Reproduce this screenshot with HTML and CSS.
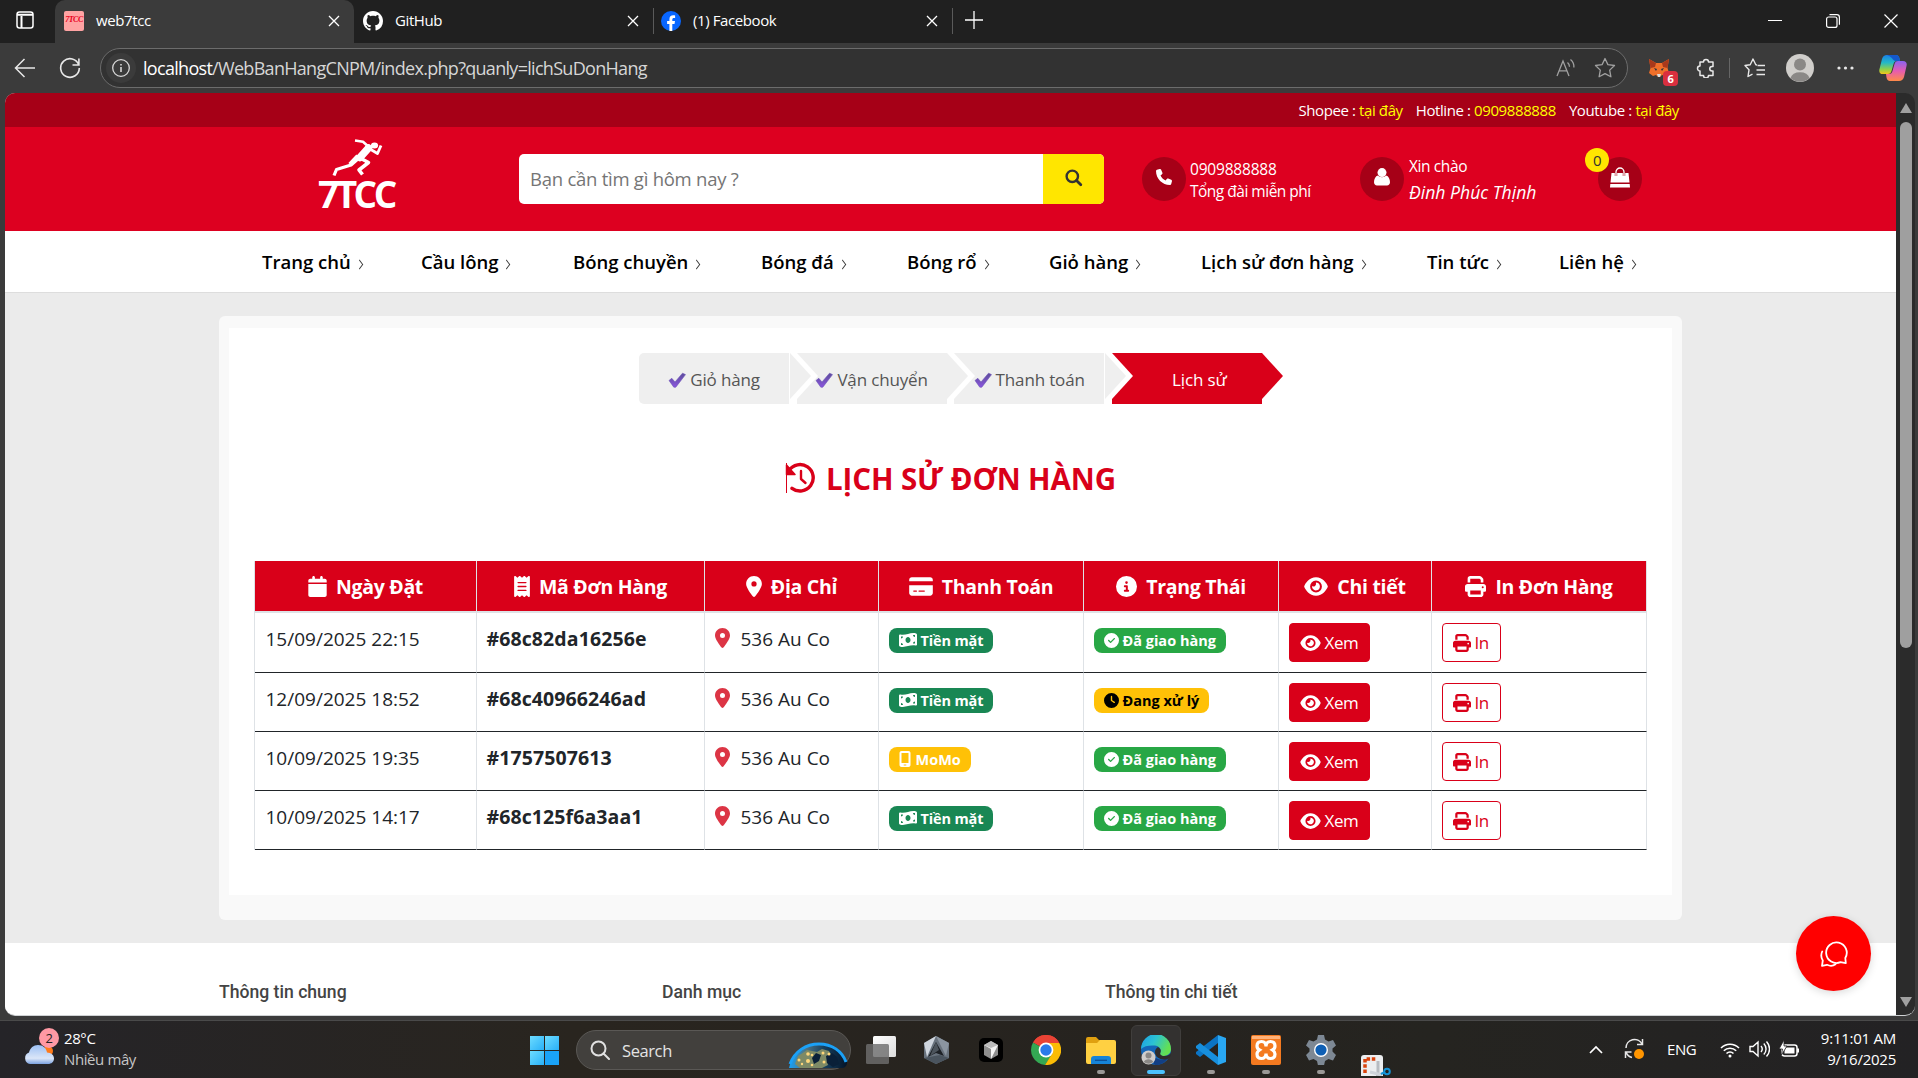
FILE: index.html
```html
<!DOCTYPE html>
<html lang="vi">
<head>
<meta charset="utf-8">
<title>web7tcc</title>
<link rel="stylesheet" href="styles.css">
</head>
<body>
<svg class="sprite" aria-hidden="true">
  <symbol id="i-calendar" viewBox="0 0 448 512"><path d="M96 32V64H48C21.500 64 0 85.500 0 112v48H448V112c0-26.500-21.500-48-48-48H352V32c0-17.700-14.300-32-32-32s-32 14.300-32 32V64H160V32c0-17.700-14.300-32-32-32S96 14.300 96 32zM448 192H0V464c0 26.500 21.500 48 48 48H400c26.500 0 48-21.500 48-48V192z"/></symbol>
  <symbol id="i-receipt" viewBox="0 0 384 512"><path d="M14 2.200C22.500-1.700 32.500-.3 39.600 5.800L80 40.400 120.400 5.800c9-7.700 22.300-7.700 31.200 0L192 40.400 232.400 5.800c9-7.700 22.300-7.700 31.200 0L304 40.400 344.400 5.800c7.100-6.100 17.100-7.500 25.600-3.600s14 12.400 14 21.800V488c0 9.400-5.500 17.900-14 21.800s-18.500 2.500-25.600-3.600L304 471.600l-40.400 34.600c-9 7.700-22.300 7.700-31.200 0L192 471.600l-40.400 34.600c-9 7.700-22.300 7.700-31.200 0L80 471.600 39.600 506.200c-7.100 6.100-17.100 7.500-25.600 3.600S0 497.400 0 488V24C0 14.600 5.500 6.100 14 2.200zM96 144c-8.800 0-16 7.200-16 16s7.200 16 16 16H288c8.800 0 16-7.200 16-16s-7.200-16-16-16H96zM80 352c0 8.800 7.200 16 16 16H288c8.800 0 16-7.200 16-16s-7.200-16-16-16H96c-8.800 0-16 7.200-16 16zM96 240c-8.800 0-16 7.200-16 16s7.200 16 16 16H288c8.800 0 16-7.200 16-16s-7.200-16-16-16H96z"/></symbol>
  <symbol id="i-pin" viewBox="0 0 384 512"><path d="M215.700 499.200C267 435 384 279.400 384 192C384 86 298 0 192 0S0 86 0 192c0 87.400 117 243 168.300 307.200c12.300 15.300 35.100 15.300 47.400 0zM192 128a64 64 0 1 1 0 128 64 64 0 1 1 0-128z"/></symbol>
  <symbol id="i-card" viewBox="0 0 576 512"><path d="M64 32C28.700 32 0 60.700 0 96v32H576V96c0-35.300-28.700-64-64-64H64zM576 224H0V416c0 35.300 28.700 64 64 64H512c35.300 0 64-28.700 64-64V224zM112 352h64c8.800 0 16 7.200 16 16s-7.200 16-16 16H112c-8.800 0-16-7.200-16-16s7.200-16 16-16zm112 16c0-8.800 7.200-16 16-16H368c8.800 0 16 7.200 16 16s-7.200 16-16 16H240c-8.800 0-16-7.200-16-16z"/></symbol>
  <symbol id="i-info" viewBox="0 0 512 512"><path d="M256 512A256 256 0 1 0 256 0a256 256 0 1 0 0 512zM216 336h24V272H216c-13.300 0-24-10.700-24-24s10.700-24 24-24h48c13.300 0 24 10.700 24 24v88h8c13.300 0 24 10.700 24 24s-10.700 24-24 24H216c-13.300 0-24-10.700-24-24s10.700-24 24-24zm40-208a32 32 0 1 1 0 64 32 32 0 1 1 0-64z"/></symbol>
  <symbol id="i-eye" viewBox="0 0 576 512"><path d="M288 32c-80.800 0-145.500 36.800-192.600 80.600C48.600 156 17.300 208 2.500 243.700c-3.300 7.900-3.300 16.700 0 24.600C17.300 304 48.600 356 95.400 399.400C142.500 443.200 207.200 480 288 480s145.500-36.800 192.600-80.600c46.800-43.500 78.100-95.400 93-131.100c3.300-7.900 3.300-16.700 0-24.600c-14.900-35.700-46.200-87.700-93-131.100C433.500 68.800 368.800 32 288 32zM144 256a144 144 0 1 1 288 0 144 144 0 1 1 -288 0zm144-64c0 35.300-28.700 64-64 64c-7.100 0-13.900-1.200-20.300-3.300c-5.500-1.800-11.900 1.600-11.700 7.400c.3 6.900 1.300 13.800 3.200 20.700c13.700 51.200 66.400 81.600 117.600 67.900s81.600-66.400 67.900-117.600c-11.100-41.500-47.800-69.400-88.600-71.100c-5.800-.2-9.200 6.100-7.400 11.700c2.100 6.400 3.300 13.200 3.300 20.300z"/></symbol>
  <symbol id="i-print" viewBox="0 0 512 512"><path d="M128 0C92.700 0 64 28.700 64 64v96h64V64H354.700L384 93.300V160h64V93.300c0-17-6.700-33.300-18.700-45.300L400 18.700C388 6.700 371.700 0 354.700 0H128zM384 352v32 64H128V384 368 352H384zm64 32h32c17.700 0 32-14.300 32-32V256c0-35.300-28.700-64-64-64H64c-35.300 0-64 28.700-64 64v96c0 17.700 14.300 32 32 32H64v64c0 35.300 28.700 64 64 64H384c35.300 0 64-28.700 64-64V384zM432 248a24 24 0 1 1 0 48 24 24 0 1 1 0-48z"/></symbol>
  <symbol id="i-check" viewBox="0 0 512 512"><path d="M256 512A256 256 0 1 0 256 0a256 256 0 1 0 0 512zM369 209L241 337c-9.400 9.400-24.600 9.400-33.900 0l-64-64c-9.400-9.400-9.400-24.600 0-33.900s24.600-9.400 33.900 0l47 47L335 175c9.400-9.400 24.600-9.400 33.900 0s9.400 24.600 0 33.900z"/></symbol>
  <symbol id="i-clock" viewBox="0 0 512 512"><path d="M256 0a256 256 0 1 1 0 512A256 256 0 1 1 256 0zM232 120V256c0 8 4 15.500 10.700 20l96 64c11 7.400 25.900 4.400 33.300-6.700s4.400-25.900-6.700-33.300L280 243.200V120c0-13.300-10.700-24-24-24s-24 10.700-24 24z"/></symbol>
  <symbol id="i-mobile" viewBox="0 0 384 512"><path d="M16 64C16 28.700 44.700 0 80 0H304c35.300 0 64 28.700 64 64V448c0 35.300-28.700 64-64 64H80c-35.300 0-64-28.700-64-64V64zM144 448c0 8.800 7.200 16 16 16h64c8.800 0 16-7.200 16-16s-7.200-16-16-16H160c-8.800 0-16 7.200-16 16zM304 64H80V384H304V64z"/></symbol>
  <symbol id="i-cash" viewBox="0 0 576 512"><path d="M0 112.500V422.300c0 18 10.100 35 27 41.300c87 32.500 174 10.300 261-11.900c79.800-20.300 159.600-40.700 239.300-18.900c23 6.300 48.700-9.500 48.700-33.400V89.700c0-18-10.100-35-27-41.300C462 15.900 375 38.100 288 60.300C208.200 80.600 128.400 100.900 48.700 79.100C25.600 72.800 0 88.600 0 112.500zM288 352c-44.200 0-80-43-80-96s35.800-96 80-96s80 43 80 96s-35.800 96-80 96zM64 352c35.300 0 64 28.700 64 64H64V352zm64-208c0 35.300-28.700 64-64 64V144h64zM512 304v64H448c0-35.300 28.700-64 64-64zM448 96h64v64c-35.300 0-64-28.700-64-64z"/></symbol>
  <symbol id="i-phone" viewBox="0 0 512 512"><path d="M164.900 24.600c-7.700-18.600-28-28.500-47.400-23.200l-88 24C12.100 30.200 0 46 0 64C0 311.400 200.600 512 448 512c18 0 33.800-12.100 38.600-29.500l24-88c5.300-19.400-4.600-39.700-23.200-47.400l-96-40c-16.300-6.800-35.200-2.100-46.300 11.600L304.700 368C234.300 334.700 177.300 277.700 144 207.300L193.300 167c13.700-11.200 18.400-30 11.600-46.300l-40-96z"/></symbol>
  <symbol id="i-x" viewBox="0 0 12 12"><path d="M1 1l10 10M11 1L1 11" fill="none" stroke="currentColor" stroke-width="1.300"/></symbol>
  <symbol id="i-tick" viewBox="0 0 18 16"><path d="M1 8.500L3.800 6.300 7 10 14.500 1.200 17.500 2.600 7.800 15.200 5.800 15.200Z" fill="url(#tickg)" stroke="#6b52b8" stroke-width=".6" stroke-linejoin="round"/></symbol>
  <linearGradient id="tickg" x1="0" y1="0" x2="0" y2="1"><stop offset="0" stop-color="#5d4e9a"/><stop offset="1" stop-color="#8a55dd"/></linearGradient>
</svg>

<div class="tabstrip">
  <div class="tab-actions"><svg width="20" height="20" viewBox="0 0 20 20" fill="none" stroke="#fff" stroke-width="1.500"><rect x="2" y="2" width="16" height="16" rx="2.500"/><path d="M2 4.800h16M6.500 6v12" stroke-width="2"/></svg></div>
  <div class="tab active"><span class="fav7">7TCC</span><span class="tab-title">web7tcc</span><svg class="x"><use href="#i-x"/></svg></div>
  <div class="tab"><svg class="fav" viewBox="0 0 16 16" fill="#fff"><path d="M8 0C3.580 0 0 3.580 0 8c0 3.540 2.290 6.530 5.470 7.590.4.070.55-.17.55-.38 0-.19-.01-.82-.01-1.490-2.010.37-2.530-.49-2.690-.94-.09-.23-.48-.94-.82-1.130-.28-.15-.68-.52-.01-.53.63-.01 1.080.58 1.230.82.72 1.210 1.870.87 2.330.66.07-.52.28-.87.51-1.070-1.780-.2-3.640-.89-3.640-3.950 0-.87.31-1.590.82-2.150-.08-.2-.36-1.020.08-2.120 0 0 .67-.21 2.200.82.64-.18 1.320-.27 2-.27.68 0 1.360.09 2 .27 1.530-1.040 2.200-.82 2.200-.82.44 1.100.16 1.920.08 2.120.51.56.82 1.270.82 2.150 0 3.070-1.870 3.750-3.650 3.950.29.25.54.73.54 1.480 0 1.070-.01 1.930-.01 2.200 0 .21.15.46.55.38A8.010 8.010 0 0 0 16 8c0-4.420-3.580-8-8-8z"/></svg><span class="tab-title">GitHub</span><svg class="x"><use href="#i-x"/></svg></div>
  <div class="tab split"><svg class="fav" viewBox="0 0 20 20"><circle cx="10" cy="10" r="10" fill="#0866ff"/><path d="M8.400 19.900V13H6.100v-2.900h2.300V8.400c0-2.800 1.300-4.200 4-4.200.5 0 1.400.1 1.700.2v2.600h-1.100c-1.300 0-1.700.5-1.700 1.700v1.400h2.700L13.500 13h-2.200v6.900z" fill="#fff"/></svg><span class="tab-title">(1) Facebook</span><svg class="x"><use href="#i-x"/></svg></div>
  <div class="newtab"><svg width="18" height="18" viewBox="0 0 18 18" stroke="#fff" stroke-width="1.300"><path d="M9 0v18M0 9h18"/></svg></div>
  <div class="winctl">
    <svg viewBox="0 0 14 14" stroke="#fff"><path d="M0 6.500h14"/></svg>
    <svg viewBox="0 0 14 14" stroke="#fff" fill="none" stroke-width="1.200"><rect x=".6" y="3" width="10.400" height="10.400" rx="2"/><path d="M3.500 .7h7.300a2.600 2.600 0 0 1 2.600 2.600v7.500"/></svg>
    <svg viewBox="0 0 14 14" stroke="#fff" stroke-width="1.200"><path d="M.5 .5l13 13M13.500 .5l-13 13"/></svg>
  </div>
</div>

<div class="toolbar">
  <div class="tb back"><svg width="22" height="20" viewBox="0 0 22 20" fill="none" stroke="#e8e8e8" stroke-width="1.500"><path d="M21 10H2M10.500 1L1.500 10l9 9"/></svg></div>
  <div class="tb reload"><svg width="22" height="22" viewBox="0 0 22 22" fill="none" stroke="#e8e8e8" stroke-width="1.600"><path d="M19.800 8A9.300 9.300 0 1 0 20.300 11M19.900 1.500V8H13.500"/></svg></div>
  <div class="address">
    <span class="site"><svg width="18" height="18" viewBox="0 0 18 18" fill="none" stroke="#d8d8d8" stroke-width="1.300"><circle cx="9" cy="9" r="8.300"/><path d="M9 8v5M9 5v1.500" stroke-width="1.600"/></svg></span>
    <span class="url"><b>localhost</b>/WebBanHangCNPM/index.php?quanly=lichSuDonHang</span>
    <svg class="read" width="20" height="20" viewBox="0 0 20 20" fill="none" stroke="#a0a0a0" stroke-width="1.300"><path d="M1 18L7 3l6 15M3.200 12.800h7.600M11.500 4.500c1.500 1.200 2 2.700 2 4.200M14.500 1.500c2.600 2 3.600 4.700 3.400 8"/></svg>
    <svg class="star" width="22" height="22" viewBox="0 0 22 22" fill="none" stroke="#a0a0a0" stroke-width="1.300" stroke-linejoin="round"><path d="M11 1.500l2.900 6.100 6.600.9-4.800 4.600 1.200 6.700L11 16.600l-5.900 3.200 1.200-6.700L1.500 8.500l6.600-.9z"/></svg>
  </div>
  <div class="ext fox"><svg width="20" height="20" viewBox="0 0 20 20"><path d="M0 1l7 4h6l7-4-1.500 9L20 15l-4 3-3-1-2 2H9l-2-2-3 1-4-3 1.500-5z" fill="#f0702a"/><path d="M0 1l7 4-1 4-4.500 1zM20 1l-7 4 1 4 4.500 1z" fill="#a8391c"/><path d="M5 10l3 1-1 2zM15 10l-3 1 1 2z" fill="#24313f"/><path d="M8 16h4l-1 3H9z" fill="#ddd"/></svg><span class="count">6</span></div>
  <div class="ext puz"><svg width="20" height="20" viewBox="0 0 20 20" fill="none" stroke="#e8e8e8" stroke-width="1.500" stroke-linejoin="round"><path d="M4 4h3.500a2.500 2.500 0 0 1 5 0H17v4.500h-1a2 2 0 0 0 0 4.500h1v4.500h-4.500a2.500 2.500 0 0 1-5 0H4V13a2.500 2.500 0 0 1 0-5z"/></svg></div>
  <div class="ext fav-list"><svg width="22" height="20" viewBox="0 0 22 20" fill="none" stroke="#e8e8e8" stroke-width="1.400" stroke-linejoin="round"><path d="M13 7l-1.200-.2L9 1 6.200 6.800 1 7.500l4 4.300L4 18.500l4.500-2.300M13.500 7.500H21M12.500 12H21M12.500 16.500H21"/></svg></div>
  <div class="ext ava"><svg width="28" height="28" viewBox="0 0 28 28"><circle cx="14" cy="14" r="14" fill="#d0cecb"/><circle cx="14" cy="10.500" r="6" fill="#8a8886"/><path d="M4.500 24a9.800 7.500 0 0 1 19 0 14 14 0 0 1-19 0z" fill="#8a8886"/></svg></div>
  <div class="ext dots"><svg width="17" height="4" fill="#e8e8e8"><circle cx="2" cy="2" r="1.600"/><circle cx="8.500" cy="2" r="1.600"/><circle cx="15" cy="2" r="1.600"/></svg></div>
  <div class="ext cop"><svg width="28" height="26" viewBox="0 0 28 26"><defs><linearGradient id="c1" x1="0" y1="0" x2="0" y2="1"><stop offset="0" stop-color="#1a7fe6"/><stop offset=".4" stop-color="#23b8c8"/><stop offset=".75" stop-color="#8fd14a"/><stop offset="1" stop-color="#f5c518"/></linearGradient><linearGradient id="c2" x1="0" y1="0" x2="0" y2="1"><stop offset="0" stop-color="#8a63f0"/><stop offset=".5" stop-color="#e65cb0"/><stop offset="1" stop-color="#ff8a48"/></linearGradient></defs><path d="M8 0h9c2 0 3 1.500 3.500 3.500L21 6h-3c-2 0-3 1-3.500 3l-2 7c-.6 2-1.500 3-3.500 3H4C1 19-.3 17 .5 14L3 4C3.800 1.500 5.500 0 8 0z" fill="url(#c1)"/><path d="M8 0h9c2 0 3 1.500 3.500 3.500L21 6h-3c-2 0-3 0-4-1.500S11 1 8 0z" fill="#1458cc"/><path d="M20 26h-9c-2 0-3-1.500-3.500-3.500L7 19h3c2 0 3-1 3.500-3l2-7c.6-2 1.500-3 3.500-3h5c3 0 4.300 2 3.500 5L25 22c-.8 2.500-2.500 4-5 4z" fill="url(#c2)"/></svg></div>
</div>

<div class="window">
  <div class="page">
    <div class="topbar">
      <span>Shopee : <a>tại đây</a></span><span>Hotline : <a>0909888888</a></span><span>Youtube : <a>tại đây</a></span>
    </div>
    <div class="header">
      <div class="logo">
        <svg width="52" height="38" viewBox="0 0 52 38" fill="none" stroke="#fff" stroke-linejoin="round"><path d="M24 1.500l8 1.200 5 4.500" stroke-width="2.600"/><path d="M37.500 9L29 18.500" stroke-width="7.500" stroke-linecap="round"/><path d="M39 10l7.500 4.500L50 6.500" stroke-width="2.800"/><path d="M29 19l8.500 4.500L28 31l3.500 4.500" stroke-width="3.600"/><path d="M28.500 18.500L20 26 5.500 30.500 3 36.500" stroke-width="3.200"/><path d="M27 17l-8 8.500" stroke-width="4.500"/><ellipse cx="43.500" cy="6.500" rx="3.600" ry="3" fill="#fff" stroke="none"/></svg>
        <div class="logo-word">7TCC</div>
      </div>
      <div class="search"><span class="ph">Bạn cần tìm gì hôm nay ?</span><span class="go"><svg width="18" height="18" viewBox="0 0 18 18" fill="none" stroke="#333"><circle cx="7.300" cy="7.300" r="5.700" stroke-width="2.400"/><path d="M11.500 11.500l4.300 4.300" stroke-width="2.800" stroke-linecap="round"/></svg></span></div>
      <div class="contact phone"><span class="disc"><svg width="16" height="16" fill="#fff"><use href="#i-phone"/></svg></span><div class="lines"><span class="num">0909888888</span><span class="free">Tổng đài miễn phí</span></div></div>
      <div class="contact user"><span class="disc"><svg width="16" height="18" viewBox="0 0 16 18" fill="#fff"><circle cx="8" cy="4.600" r="4.500"/><path d="M4 7.500c2 2.200 6 2.200 8 0 2.600.6 4 3.500 4 6.800 0 2-1.300 3.200-3 3.200H3c-1.700 0-3-1.200-3-3.200 0-3.300 1.400-6.200 4-6.800z"/></svg></span><div class="lines"><span>Xin chào</span><em>Đinh Phúc Thịnh</em></div></div>
      <div class="contact cart"><span class="disc"><svg width="20" height="21" viewBox="0 0 20 21" fill="#fff"><path d="M1.500 6h17l1 9.500H.5zM.3 17h19.400l.3 3.500H0z"/><path d="M6 9V5a4 4 0 0 1 8 0v4" fill="none" stroke="#a60017" stroke-width="2.400"/><path d="M6 9V5a4 4 0 0 1 8 0v4" fill="none" stroke="#fff" stroke-width="1.300"/></svg></span><span class="badge0">0</span></div>
    </div>
    <nav class="nav">
      <a>Trang chủ</a><a>Cầu lông</a><a>Bóng chuyền</a><a>Bóng đá</a><a>Bóng rổ</a><a>Giỏ hàng</a><a>Lịch sử đơn hàng</a><a>Tin tức</a><a>Liên hệ</a>
    </nav>
    <div class="main">
      <div class="shell"><div class="panel">
        <div class="steps">
          <div class="step first"><svg class="tick"><use href="#i-tick"/></svg>Giỏ hàng</div>
          <div class="step"><svg class="tick"><use href="#i-tick"/></svg>Vận chuyển</div>
          <div class="step"><svg class="tick"><use href="#i-tick"/></svg>Thanh toán</div>
          <div class="step current">Lịch sử</div>
        </div>
        <h1><svg width="31" height="32" viewBox="0 0 31 32" fill="none" stroke="#d90019"><path d="M1.500 1v30" stroke-width="1"/><path d="M4 8.500A13.200 13.200 0 1 1 7 26.300" stroke-width="3.400" stroke-linecap="round"/><path d="M1.500 3v9.500H10z" fill="#d90019" stroke-width="1.500" stroke-linejoin="round"/><path d="M16 9v8l4.500 4" stroke-width="2.400" stroke-linecap="round" stroke-linejoin="round"/></svg>LỊCH SỬ ĐƠN HÀNG</h1>
        <table>
          <colgroup><col class="c1"><col class="c2"><col class="c3"><col class="c4"><col class="c5"><col class="c6"><col class="c7"></colgroup>
          <thead><tr>
            <th><svg class="w18"><use href="#i-calendar"/></svg>Ngày Đặt</th>
            <th><svg class="w16"><use href="#i-receipt"/></svg>Mã Đơn Hàng</th>
            <th><svg class="w16"><use href="#i-pin"/></svg>Địa Chỉ</th>
            <th><svg class="w24"><use href="#i-card"/></svg>Thanh Toán</th>
            <th><svg class="w21"><use href="#i-info"/></svg>Trạng Thái</th>
            <th><svg class="w24"><use href="#i-eye"/></svg>Chi tiết</th>
            <th><svg class="w21"><use href="#i-print"/></svg>In Đơn Hàng</th>
          </tr></thead>
          <tbody>
            <tr><td class="date">15/09/2025 22:15</td><td class="id">#68c82da16256e</td><td><svg class="pin"><use href="#i-pin"/></svg>536 Au Co</td>
              <td><span class="pill cash"><svg><use href="#i-cash"/></svg>Tiền mặt</span></td>
              <td><span class="pill done"><svg><use href="#i-check"/></svg>Đã giao hàng</span></td>
              <td><span class="btn view"><svg><use href="#i-eye"/></svg>Xem</span></td><td><span class="btn print"><svg><use href="#i-print"/></svg>In</span></td></tr>
            <tr><td class="date">12/09/2025 18:52</td><td class="id">#68c40966246ad</td><td><svg class="pin"><use href="#i-pin"/></svg>536 Au Co</td>
              <td><span class="pill cash"><svg><use href="#i-cash"/></svg>Tiền mặt</span></td>
              <td><span class="pill wait"><svg><use href="#i-clock"/></svg>Đang xử lý</span></td>
              <td><span class="btn view"><svg><use href="#i-eye"/></svg>Xem</span></td><td><span class="btn print"><svg><use href="#i-print"/></svg>In</span></td></tr>
            <tr><td class="date">10/09/2025 19:35</td><td class="id">#1757507613</td><td><svg class="pin"><use href="#i-pin"/></svg>536 Au Co</td>
              <td><span class="pill momo"><svg><use href="#i-mobile"/></svg>MoMo</span></td>
              <td><span class="pill done"><svg><use href="#i-check"/></svg>Đã giao hàng</span></td>
              <td><span class="btn view"><svg><use href="#i-eye"/></svg>Xem</span></td><td><span class="btn print"><svg><use href="#i-print"/></svg>In</span></td></tr>
            <tr><td class="date">10/09/2025 14:17</td><td class="id">#68c125f6a3aa1</td><td><svg class="pin"><use href="#i-pin"/></svg>536 Au Co</td>
              <td><span class="pill cash"><svg><use href="#i-cash"/></svg>Tiền mặt</span></td>
              <td><span class="pill done"><svg><use href="#i-check"/></svg>Đã giao hàng</span></td>
              <td><span class="btn view"><svg><use href="#i-eye"/></svg>Xem</span></td><td><span class="btn print"><svg><use href="#i-print"/></svg>In</span></td></tr>
          </tbody>
        </table>
      </div></div>
    </div>
    <footer class="footer"><h4>Thông tin chung</h4><h4>Danh mục</h4><h4>Thông tin chi tiết</h4></footer>
    <div class="chat"><svg width="28" height="26" viewBox="0 0 28 26" fill="none" stroke="#fff" stroke-width="1.800" stroke-linejoin="round" stroke-linecap="round"><path d="M25.800 22.200l-5.300-1A10.300 10.300 0 1 1 25.300 17z"/><path d="M2.200 10.500A9.500 9.500 0 0 0 2.800 19.500L2 24.800l5-1c2.800 1.400 6 1.300 8.500-.5"/></svg></div>
  </div>
  <div class="scroll"><i class="up"></i><i class="thumb"></i><i class="down"></i></div>
</div>

<div class="taskbar">
  <div class="weather">
    <svg width="34" height="38" viewBox="0 0 34 38"><defs><linearGradient id="cl" x1="0" y1="0" x2="0" y2="1"><stop offset="0" stop-color="#9cc0f4"/><stop offset=".7" stop-color="#dbe6f8"/><stop offset="1" stop-color="#7ba2e0"/></linearGradient></defs><circle cx="24" cy="23" r="5" fill="#ff7a1a"/><path d="M6 36a6 6 0 0 1-1-11.500C6 20 9.500 17 14 17c5 0 8.500 3.500 9 7.500 4 .2 7 2.500 7 6 0 3.300-2.500 5.500-6 5.500z" fill="url(#cl)"/></svg>
    <span class="wbadge">2</span>
    <div class="wtext"><span>28°C</span><span>Nhiều mây</span></div>
  </div>
  <div class="start"><i></i><i></i><i></i><i></i></div>
  <div class="tsearch"><svg width="20" height="20" viewBox="0 0 20 20" fill="none" stroke="#e0e0e0" stroke-width="2"><circle cx="8.500" cy="8.500" r="7"/><path d="M13.500 13.500l5.500 5.500" stroke-linecap="round"/></svg><span>Search</span>
    <svg class="globe" width="60" height="27" viewBox="0 0 60 27"><defs><linearGradient id="gl" x1="0" y1="0" x2="1" y2="0"><stop offset="0" stop-color="#18a0f5"/><stop offset=".3" stop-color="#4f7484"/><stop offset=".6" stop-color="#17405f"/><stop offset="1" stop-color="#041428"/></linearGradient></defs><path d="M1 26C5 10 17 1 31 1s24 8 28 19c0 4-2 6-6 6z" fill="url(#gl)"/><path d="M2 22C7 9 18 2 31 2s23 7 27 18" fill="none" stroke="#1ba1f7" stroke-width="3"/><path d="M10 14l9-6 10 2 5-3 7 2 3 6-5 3 1 5-6 3H12l-5-4z" fill="#7d8a66"/><path d="M28 11l5 2-2 6-5 3-2-6zM38 14l6-3 5 4 2 7-6 3-6-4z" fill="#0a2038"/><g fill="#ffd77a"><circle cx="20" cy="12" r="1.800"/><circle cx="24" cy="13" r="1.300"/><circle cx="35" cy="11" r="1.500"/><circle cx="11" cy="18" r="1.500"/><circle cx="36" cy="20" r="1.500"/><circle cx="20" cy="19" r="2"/><circle cx="24" cy="23" r="1.300"/><circle cx="41" cy="12" r="1.500"/><circle cx="14" cy="22" r="1.200"/></g></svg>
  </div>
  <div class="apps">
    <div class="app"><svg viewBox="0 0 30 30"><defs><linearGradient id="tv" x1="0" y1="0" x2="1" y2="1"><stop offset="0" stop-color="#fff"/><stop offset="1" stop-color="#dcdcdc"/></linearGradient></defs><rect x="7" y="1" width="23" height="21" rx="1.500" fill="url(#tv)"/><rect x="0" y="9" width="23" height="20" rx="1.500" fill="#6e6e6e" opacity=".82"/></svg></div>
    <div class="app"><svg viewBox="0 0 30 30"><path d="M15 1l13 7v15l-13 6-12-6V8z" fill="#68727d"/><path d="M15 1L3 8l3 14z" fill="#cfd6de"/><path d="M15 1l13 7-3 13z" fill="#8b95a0"/><path d="M3 23l12 6 13-6-9-3z" fill="#4a545e"/><path d="M15 7l8 14-8-3-8 4z" fill="#1d2126"/><path d="M15 7l3 8-9 6z" fill="#4c545c"/></svg></div>
    <div class="app"><svg viewBox="0 0 30 30"><rect x="3" y="3" width="24" height="24" rx="5" fill="#000"/><path d="M15 6l7 4v10l-7 4-7-4V10z" fill="#8d8d8d"/><path d="M8 10h14l-7 14v-10z" fill="#f3f3f3"/><path d="M15 6l7 4-7 3-7-3z" fill="#bbb"/></svg></div>
    <div class="app"><svg viewBox="0 0 30 30"><path d="M15 15L2 7.500A15 15 0 0 1 28 7.500z" fill="#ea4335"/><path d="M15 15L2 7.500a15 15 0 0 0 12 22.400L21.500 19z" fill="#34a853"/><path d="M15 8h13.300A15 15 0 0 1 14 30l7.500-12z" fill="#fbbc05"/><path d="M2 7.500A15 15 0 0 1 28.300 8H15z" fill="#ea4335"/><circle cx="15" cy="15" r="7.400" fill="#fff"/><circle cx="15" cy="15" r="5.700" fill="#2b7bea"/></svg></div>
    <div class="app run"><svg viewBox="0 0 30 30"><path d="M0 4a2 2 0 0 1 2-2h8l3 3h2v10H0z" fill="#e0a010"/><path d="M0 8h11l3-3h14a2 2 0 0 1 2 2v20a2 2 0 0 1-2 2H2a2 2 0 0 1-2-2z" fill="#ffd042"/><path d="M5 29v-5a3 3 0 0 1 3-3h14a3 3 0 0 1 3 3v5z" fill="#1684d8"/><path d="M9 25.300h12" stroke="#0c4f96" stroke-width="1.300"/></svg></div>
    <div class="app run live"><svg viewBox="0 0 30 30"><defs><linearGradient id="e1" x1="0" y1="0" x2="1" y2=".4"><stop offset="0" stop-color="#1b9de8"/><stop offset=".5" stop-color="#2cc3d2"/><stop offset="1" stop-color="#63e052"/></linearGradient></defs><circle cx="15" cy="15" r="15" fill="#1467b8"/><path d="M0 14A15 15 0 0 1 30 14c0 4-3 7-7.500 7-3 0-4.500-1.500-3.500-3 2-4-1-7-5-7.500C8 10 3 11 0 14z" fill="url(#e1)"/><path d="M12 17c0 6 6 9 12 7l3-1c-3 5-8 7.500-13 7-4-3-5-9-2-13z" fill="#123f84"/><path d="M14 17c0-2 1-4 3-5 2 1 3.500 3 2.500 5.500-.9 1.700.5 3.500 4 3.500 2.500 0 5-1 6.500-3l-.2 3-2 2.500c-6 2.500-13.800 0-13.800-6.500z" fill="#2f2d2c"/><circle cx="7.500" cy="22.500" r="7" fill="#cfcdcb"/><circle cx="7.500" cy="20.500" r="3" fill="#8a8886"/><path d="M2.800 27a5 4 0 0 1 9.400 0 7 7 0 0 1-9.400 0z" fill="#8a8886"/></svg></div>
    <div class="app run"><svg viewBox="0 0 30 30"><path d="M22 0l8 3v24l-8 3z" fill="#29a7f2"/><path d="M22 0v8L4 22l-4-3v-2z" fill="#0b74c4"/><path d="M22 30v-8L4 8l-4 3v2z" fill="#178fdd"/></svg></div>
    <div class="app run"><svg viewBox="0 0 30 30"><rect width="30" height="30" rx="2" fill="#f47a20"/><path d="M1 1h28v3H1z" fill="#ffb27a"/><path d="M15 11.500c0-3-1.500-5-4.500-5S6 8.500 6 11c0 2.200 1 3.200 2.500 4C7 16 6 17 6 19c0 3 1.800 4.500 4.500 4.500s4.500-2 4.500-5c0 3 1.500 5 4.500 5S24 22 24 19c0-2-1-3-2.500-4 1.500-.8 2.500-1.800 2.500-4 0-2.500-1.500-4.500-4.500-4.500s-4.500 2-4.500 5z" fill="none" stroke="#fff" stroke-width="3.200"/></svg></div>
    <div class="app run"><svg viewBox="0 0 30 30"><path d="M12 0h6l1 4.500 3.500 2L27 5l3 5.500-3.500 3v3L30 20l-3 5.500-4.500-1.500-3.500 2-1 4.500h-6L11 26l-3.500-2L3 25.500 0 20l3.500-3.500v-3L0 10.500 3 5l4.500 1.500 3.500-2z" fill="#7d8894"/><circle cx="15" cy="15" r="7" fill="#fff"/><circle cx="15" cy="15" r="5.600" fill="#0e5fb4"/></svg></div>
    <div class="app snip"><svg viewBox="0 0 30 30"><rect x="0" y="6" width="22" height="24" rx="3" fill="#eceef0"/><path d="M4 24V10h12" fill="none" stroke="#d9420b" stroke-width="3.500" stroke-dasharray="3.500 1.700"/><path d="M17 12v12l-1 6" stroke="#b7bcc2" stroke-width="3" fill="none"/><path d="M9 23l12 3" stroke="#cfd4da" stroke-width="3"/><path d="M20 25l4-2" stroke="#1593d6" stroke-width="2.500"/><circle cx="26" cy="22.500" r="2.800" fill="none" stroke="#1593d6" stroke-width="2"/></svg></div>
  </div>
  <div class="tray">
    <svg class="t-up" width="14" height="9" viewBox="0 0 14 9" fill="none" stroke="#fff" stroke-width="1.700"><path d="M1 8l6-6 6 6"/></svg>
    <svg class="t-sync" width="24" height="22" viewBox="0 0 24 22" fill="none" stroke="#e8e8e8" stroke-width="1.500"><path d="M3 10A8.500 8.500 0 0 1 19 6M19.500 1v5.500H14M9 19.500A8.500 8.500 0 0 1 3 14M2.500 20v-6H8.500"/><circle cx="16" cy="16" r="5" fill="#ff9500" stroke="none"/></svg>
    <span class="lang">ENG</span>
    <svg class="t-wifi" width="20" height="17" viewBox="0 0 20 17" fill="none" stroke="#fff" stroke-width="1.600"><path d="M1 7a12.700 12.700 0 0 1 18 0M3.800 9.800a8.800 8.800 0 0 1 12.400 0M6.500 12.500a5 5 0 0 1 7 0"/><circle cx="10" cy="15" r="1.500" fill="#fff" stroke="none"/></svg>
    <svg class="t-vol" width="21" height="18" viewBox="0 0 21 18" fill="none" stroke="#fff" stroke-width="1.400"><path d="M1 6.500h3L9 2v14l-5-4.500H1zM12 6c1.500 1.800 1.500 4.200 0 6M14.800 3.500c3 3.200 3 7.800 0 11M17.500 1.500c4 4.500 4 10.500 0 15"/></svg>
    <svg class="t-bat" width="21" height="18" viewBox="0 0 21 18"><rect x="3" y="5" width="15" height="11" rx="2.500" fill="none" stroke="#fff" stroke-width="1.500"/><rect x="5.500" y="7.500" width="10" height="6" fill="#fff"/><path d="M19 8.500v4" stroke="#fff" stroke-width="2"/><path d="M5 0L0 9h3.500L2.500 15 8 6H5z" fill="#fff" stroke="#232225" stroke-width=".8"/></svg>
    <div class="clock"><span>9:11:01 AM</span><span>9/16/2025</span></div>
  </div>
</div>
</body>
</html>
```

FILE: styles.css
```css
* { box-sizing: border-box; }
body {
  margin: 0;
  width: 1918px;
  height: 1078px;
  overflow: hidden;
  background: #3b3b3b;
  font-family: "Open Sans", "Noto Sans", sans-serif;
  letter-spacing: -0.4px;
  white-space: nowrap;
}
svg { display: block; flex: none; }
.sprite { position: absolute; width: 0; height: 0; }

/* tab strip */
.tabstrip { display: flex; height: 43px; background: #202020; color: #fff; }
.tab-actions { width: 55px; padding: 10px 0 0 15px; background: #202020; }
.tab {
  display: flex;
  align-items: center;
  width: 299px;
  height: 41px;
  padding-left: 9px;
  font-size: 15px;
}
.tab.active { width: 299px; height: 43px; padding-bottom: 2px; background: #3b3b3b; border-radius: 10px 10px 0 0; }
.tab.split { border-left: 1px solid #5a5a5a; height: 26px; margin-top: 8px; padding: 0 0 1px 7px; }
.fav7 {
  width: 20px; height: 20px; border-radius: 2px; background: #ffa3a3; color: #e8001c;
  font: italic 700 8px/18px "Liberation Serif", serif; text-align: center; letter-spacing: -.5px;
}
.fav { width: 20px; height: 20px; }
.tab-title { flex: 1; margin-left: 12px; padding-bottom: 2px; }
.x { width: 12px; height: 12px; margin-right: 14px; }
.newtab { width: 60px; height: 26px; margin-top: 8px; padding: 3px 0 0 12px; border-left: 1px solid #5a5a5a; }
.winctl { display: flex; gap: 44px; margin-left: auto; padding: 14px 20px 0 0; }
.winctl svg { width: 14px; height: 14px; }

/* toolbar */
.toolbar { display: flex; align-items: center; height: 50px; }
.tb { display: flex; justify-content: center; width: 45px; }
.back { width: 50px; }
.reload { width: 40px; margin-right: 10px; }
.address {
  display: flex; align-items: center; flex: none; width: 1528px; height: 40px; padding-left: 5px;
  background: #323232; border: 1.500px solid #6c6c6c; border-radius: 20px;
  color: #d6d6d6; font-size: 18px;
}
.address b { font-weight: 400; color: #fff; }
.site { display: flex; align-items: center; justify-content: center; width: 30px; height: 30px; border-radius: 50%; background: #3b3b3b; }
.url { flex: 1; margin-left: 7px; padding-bottom: 1px; letter-spacing: -0.700px; }
.star { margin: 0 11px 0 18px; }
.ext { display: flex; flex: none; align-items: center; justify-content: center; }
.fox { position: relative; width: 62px; height: 36px; }
.count {
  position: absolute; left: 35px; top: 21px; width: 15px; height: 15px; border-radius: 4px;
  background: #d92f3f; color: #fff; font: 700 11px/15px "Open Sans", sans-serif; text-align: center;
}
.puz { width: 32px; }
.fav-list { width: 51px; margin-left: 7px; height: 20px; border-left: 1px solid #666; }
.ava { width: 40px; }
.dots { width: 50px; }
.cop { width: 46px; }

/* page window */
.window { display: flex; width: 1910px; height: 923px; margin-left: 5px; border-radius: 10px; overflow: hidden; background: #2b2b2b; border-bottom: 1px solid #cfd2d4; }
.page { position: relative; width: 1891px; background: #ebebeb; }
.scroll { display: flex; flex-direction: column; align-items: center; width: 19px; padding-top: 10px; }
.up, .down { border: 6px solid transparent; border-top: 0; border-bottom: 10px solid #a0a0a0; }
.down { margin-top: auto; margin-bottom: 8px; border-bottom: 0; border-top: 10px solid #a0a0a0; }
.thumb { width: 12px; height: 526px; margin-top: 9px; border-radius: 6px; background: #9f9f9f; }

.topbar { display: flex; justify-content: flex-end; align-items: center; gap: 13px; height: 34px; padding-right: 217px; background: #a60017; color: #fff; font-size: 15px; }
.topbar a { color: #ff0; }

.header { display: flex; height: 104px; background: #dd0020; color: #fff; }
.logo { width: 199px; margin-left: 315px; padding-top: 12px; }
.logo > svg { margin-left: 11px; }
.logo-word { margin: -3px 0 0 -2px; font: 700 37px/40px "Open Sans", sans-serif; letter-spacing: -3.500px; }
.search { display: flex; width: 585px; height: 50px; margin-top: 27px; border-radius: 5px; overflow: hidden; background: #fff; color: #757575; font-size: 18.500px; letter-spacing: -.25px; }
.ph { flex: 1; padding-left: 11px; line-height: 50px; }
.go { display: flex; justify-content: center; width: 61px; padding-top: 15px; background: #ffe600; }
.contact { display: flex; position: relative; margin-top: 30px; }
.disc { display: flex; align-items: center; justify-content: center; width: 44px; height: 44px; border-radius: 50%; background: #a60017; padding-bottom: 4px; }
.lines { display: flex; flex-direction: column; margin-left: 4px; font-size: 15.500px; line-height: 22px; padding-top: 1px; }
.num { letter-spacing: -.2px; }
.free { letter-spacing: -.5px; }
.phone { width: 218px; margin-left: 38px; }
.user { width: 238px; }
.user .lines { margin-left: 5px; padding-top: 0; margin-top: -4px; line-height: 26px; }
.user em { font-size: 17.600px; letter-spacing: 0; }
.badge0 { position: absolute; left: -13px; top: -9px; width: 24px; height: 24px; border-radius: 50%; background: #ffe600; color: #333; font-size: 15px; line-height: 25px; text-align: center; }

.nav {
  display: grid; align-items: center; height: 62px; padding: 0 0 1px 257px;
  grid-template-columns: 159px 152px 188px 146px 142px 152px 226px 132px auto;
  background: #fff; border-bottom: 1px solid #ddd; font-size: 18.500px; font-weight: 600; letter-spacing: 0; color: #000;
}
.nav a::after { content: ""; display: inline-block; width: 6px; height: 6px; margin-left: 5px; vertical-align: 1px; border: solid #333; border-width: 1.300px 1.300px 0 0; transform: scaleX(.75) rotate(45deg); }

.main { padding: 23px 0 0 214px; height: 650px; }
.shell { width: 1463px; height: 604px; padding: 12px 10px 25px; background: #f9f9f9; border-radius: 6px; }
.panel { height: 567px; padding: 25px 25px 0; background: #fff; }

.steps { display: flex; gap: 7.600px; margin-left: 385px; }
.step { position: relative; display: flex; align-items: center; justify-content: center; width: 150px; height: 51px; padding-top: 2px; background: #efefef; color: #555; font-size: 17px; letter-spacing: -.15px; }
.step.first { border-radius: 5px 0 0 5px; }
.step::before, .step::after { content: ""; position: absolute; top: 0; left: 0; border: solid transparent; border-width: 23px 0 23px 21px; border-left-color: #fff; }
.step::after { left: 150.500px; border-left-color: #efefef; z-index: 1; }
.step.first::before { display: none; }
.step.current { background: #d90019; color: #fff; padding-left: 25px; }
.step.current::after { border-left-color: #d90019; left: 150px; }
.tick { width: 18px; height: 16px; margin-right: 4px; }

h1 { display: flex; align-items: center; justify-content: center; gap: 10px; height: 40px; margin: 54px 0 63px; color: #d90019; font-size: 29.500px; font-weight: 700; letter-spacing: -.1px; }

table { width: 1393px; table-layout: fixed; border-spacing: 0; border-left: 1px solid #dee2e6; color: #212529; font-size: 19px; letter-spacing: 0; }
.c1 { width: 222px; } .c2 { width: 228px; } .c3 { width: 174px; } .c4 { width: 205px; } .c5 { width: 195px; } .c6 { width: 153px; } .c7 { width: 215px; }
th, td { padding: 0; border-right: 1px solid #dee2e6; }
th { height: 52px; background: #d90019; border-bottom: 2px solid #dee2e6; color: #fff; font-size: 19.500px; font-weight: 700; letter-spacing: -.3px; }
th svg { display: inline-block; height: 21px; margin-right: 9px; vertical-align: -3px; fill: currentColor; }
.w18 { width: 19px; } .w16 { width: 16px; } .w24 { width: 24px; } .w21 { width: 21px; }
td { height: 59px; padding: 10px 0 0 9.500px; border-bottom: 1px solid #212529; vertical-align: top; line-height: 32px; }
tbody tr:first-child td { height: 60px; }
.date { padding-left: 10.500px; }
.id { font-weight: 700; font-size: 19.500px; letter-spacing: .1px; }
td svg { fill: currentColor; }
.pin { display: inline-block; width: 15px; height: 20px; margin: 0 11px 0 0; vertical-align: -2px; color: #dc3545; }
.pill { display: inline-flex; align-items: center; gap: 4px; height: 25.500px; margin-top: 4.500px; padding: 0 10px; border-radius: 8px; color: #fff; font-size: 14.500px; font-weight: 700; letter-spacing: 0; line-height: 25px; vertical-align: top; }
.pill svg { width: 15px; height: 15px; }
.cash { background: #198754; letter-spacing: -.15px; } .done { background: #28a745; } .momo, .wait { background: #ffc107; } .wait { color: #000; }
.cash svg { width: 18px; height: 16px; }
.momo svg { width: 12px; height: 16px; }
.momo { gap: 5px; }
.btn { display: inline-flex; align-items: center; gap: 4px; height: 39px; padding: 0 11px 0 10px; border: 1px solid #d90019; border-radius: 4px; font-size: 17px; letter-spacing: -.4px; vertical-align: top; }
.view { background: #d90019; color: #fff; }
.view svg { width: 21px; height: 18px; }
.print { color: #d90019; }
.print svg { width: 18px; height: 18px; }

.footer { display: grid; grid-template-columns: 443px 443px auto; height: 79px; padding: 39px 0 0 214px; background: #fff; }
.footer h4 { margin: 0; font: 500 17.600px/20px Roboto, sans-serif; letter-spacing: 0; color: #444; }
.chat { position: absolute; right: 25px; bottom: 24px; display: flex; align-items: center; justify-content: center; width: 75px; height: 75px; border-radius: 50%; background: #f00; box-shadow: 0 2px 8px rgba(0,0,0,.15); }

/* taskbar */
.taskbar { display: flex; height: 58px; margin-top: 4px; color: #fff; font-size: 15px; border-top: 1px solid #4a4a4a; background: linear-gradient(90deg, #252428, #29251f 30%, #26231f 60%, #252420 75%, #232224); }
.weather { display: flex; position: relative; width: 530px; padding: 7px 0 0 24px; }
.wbadge { position: absolute; left: 39px; top: 7px; width: 20px; height: 20px; border-radius: 50%; background: #ff99a4; color: #222; font-size: 13px; line-height: 20px; text-align: center; }
.wtext, .clock { display: flex; flex-direction: column; line-height: 21px; }
.wtext { margin-left: 6px; }
.wtext span:last-child { color: #c6c6c6; }
.start { display: grid; grid-template-columns: 14px 14px; grid-template-rows: 14px 14px; gap: 1px; width: 46px; padding-top: 15px; }
.start i { background: linear-gradient(135deg, #6ddcff, #29b0f8); }
.start i:nth-child(4) { background: #1aa3f8; }
.tsearch { display: flex; align-items: center; position: relative; width: 275px; height: 40px; margin-top: 9px; padding-left: 13px; border-radius: 20px; border: 1px solid #5a5855; background: #42403d; color: #e4e4e4; font-size: 16.500px; }
.tsearch span { margin-left: 12px; flex: 1; }
.globe { margin: 11px 2px 0 0; }
.apps { display: flex; gap: 5px; margin-left: 5px; padding-top: 4px; }
.app { display: flex; flex-direction: column; align-items: center; width: 50px; height: 51px; padding-top: 10px; border-radius: 6px; }
.app svg { width: 30px; height: 30px; }
.run::after { content: ""; width: 8px; height: 4px; margin-top: 5px; border-radius: 2px; background: #9a9896; }
.live { background: #333130; border: 1px solid #403e3c; padding-top: 9px; }
.live::after { width: 18px; background: #4cc2ff; }
.snip { padding-top: 24px; overflow: hidden; }
.tray { display: flex; align-items: center; margin-left: auto; padding: 0 22px 1px 0; }
.t-sync { margin: 0 20px 0 20px; }
.lang { width: 53px; }
.t-vol { margin: 0 9px 0 9px; }
.clock { width: 96px; text-align: right; letter-spacing: -.25px; }
```
